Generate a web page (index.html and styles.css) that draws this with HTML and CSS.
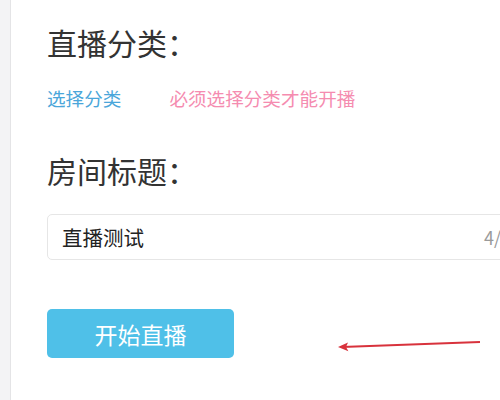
FILE: index.html
```html
<!DOCTYPE html>
<html lang="zh-CN">
<head>
    <meta charset="UTF-8">
    <title>开始直播</title>
    <link rel="stylesheet" href="styles.css">
</head>
<body>
    <div class="page">
        <div class="side"></div>
        <div class="main">
            <!-- 直播分类 -->
            <h2 class="label">直播分类：</h2>
            <div class="category">
                <a class="pick">选择分类</a>
                <span class="tip">必须选择分类才能开播</span>
            </div>

            <!-- 房间标题 -->
            <h2 class="label">房间标题：</h2>
            <div class="title-box">
                <span class="title-text">直播测试</span>
                <span class="count">4/20</span>
            </div>

            <button class="start">开始直播</button>
        </div>
    </div>

    <svg class="arrow" width="500" height="400" viewBox="0 0 500 400">
        <line x1="480" y1="342" x2="342" y2="347" stroke="#d8323c" stroke-width="2"/>
        <path d="M338 347 L348 342.5 L346 347 L348.4 351.3 Z" fill="#d8323c"/>
    </svg>
</body>
</html>
```

FILE: styles.css
```css
body {
    margin: 0;
    font-family: "Noto Sans CJK SC", "Liberation Sans", sans-serif;
    background: #fff;
    overflow: hidden;
}

.page {
    display: flex;
    height: 400px;
}

.side {
    width: 10px;
    background-color: #f3f3f5;
    border-right: 1px solid #e4e4e6;
    flex-shrink: 0;
}

.main {
    padding: 24px 0 0 36px;
    width: 620px;
    flex-shrink: 0;
}

.label {
    margin: 0;
    font-size: 30px;
    font-weight: normal;
    line-height: 36px;
    color: #333;
}

.category {
    display: flex;
    gap: 48px;
    margin-top: 26px;
    margin-bottom: 42px;
    font-size: 18.6px;
    line-height: 24px;
}

.pick {
    color: #4aa6da;
    cursor: pointer;
}

.tip {
    color: #f58cb0;
}

.title-box {
    display: flex;
    align-items: center;
    margin-top: 26px;
    height: 44px;
    border: 1px solid #e6e6e6;
    border-radius: 5px;
    padding: 0 14px;
}

.title-text {
    font-size: 20.5px;
    color: #222;
}

.count {
    margin-left: auto;
    margin-right: 131px;
    font-size: 18px;
    color: #9a9a9a;
}

.start {
    margin-top: 49px;
    width: 187px;
    height: 49px;
    border: none;
    border-radius: 5px;
    background-color: #4fc0e8;
    color: #fff;
    font-family: inherit;
    font-size: 23px;
    cursor: pointer;
}

.arrow {
    position: absolute;
    left: 0;
    top: 0;
}
```
